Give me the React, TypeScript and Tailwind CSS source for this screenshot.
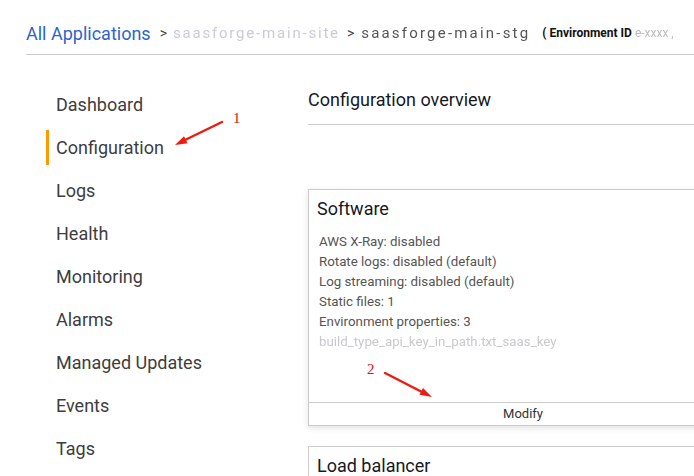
import React from "react";

const NAV = [
  "Dashboard",
  "Configuration",
  "Logs",
  "Health",
  "Monitoring",
  "Alarms",
  "Managed Updates",
  "Events",
  "Tags",
];

const SOFTWARE = [
  "AWS X-Ray: disabled",
  "Rotate logs: disabled (default)",
  "Log streaming: disabled (default)",
  "Static files: 1",
  "Environment properties: 3",
];

function Annotations() {
  return (
    <div className="pointer-events-none absolute inset-0">
      <svg width="694" height="476" className="absolute left-0 top-0">
        <line x1="222" y1="122" x2="184" y2="140.5" stroke="#ec1c12" strokeWidth="2.5" strokeLinecap="round" />
        <polygon points="175,145 187.6,143.2 184,136.2" fill="#ec1c12" />
        <line x1="385" y1="373" x2="422" y2="392" stroke="#ec1c12" strokeWidth="2.5" strokeLinecap="round" />
        <polygon points="432,397 419.5,394.8 423,388" fill="#ec1c12" />
      </svg>
      <span className="absolute left-[233px] top-[109px] text-[15px] leading-[18px] text-[#e3120b] font-['Liberation_Serif',serif]">
        1
      </span>
      <span className="absolute left-[367px] top-[360px] text-[15px] leading-[18px] text-[#e3120b] font-['Liberation_Serif',serif]">
        2
      </span>
    </div>
  );
}

export default function App() {
  return (
    <div className="relative h-[476px] w-[694px] overflow-hidden bg-white font-['Roboto',sans-serif]">
      <div className="ml-[26px] flex h-[55px] items-center whitespace-nowrap border-b border-[#cccccc] pt-[12px]">
        <span className="text-[18px] text-[#2b65c8]">All Applications</span>
        <span className="ml-[9px] mr-[6px] text-[14px] text-[#444]">&gt;</span>
        <span className="text-[15px] tracking-[1.8px] text-[#c9cbd9] blur-[0.6px]">saasforge-main-site</span>
        <span className="mx-[7px] text-[14px] text-[#444]">&gt;</span>
        <span className="text-[15px] tracking-[2.2px] text-[#555] blur-[0.6px]">saasforge-main-stg</span>
        <span className="ml-[12px] text-[12px] font-bold text-[#111]">( Environment ID</span>
        <span className="ml-[3px] text-[12px] text-[#bbb] blur-[0.6px]">e-xxxx ,</span>
      </div>

      <div className="flex">
        <nav className="w-[308px] shrink-0 pl-[46px] pt-[28px]">
          {NAV.map((item) => {
            const active = item === "Configuration";
            return (
              <div key={item} className="flex h-[43px] items-center">
                <div className={`h-[35px] w-[3px] ${active ? "bg-[#ff9900]" : ""}`} />
                <span className="ml-[7px] text-[18px] text-[#3d3d3d]">{item}</span>
              </div>
            );
          })}
        </nav>

        <main className="w-[430px] shrink-0">
          <div className="border-b border-[#cccccc] pb-[12px] pt-[33px]">
            <h2 className="text-[18px] leading-[24px] text-[#16191f]">Configuration overview</h2>
          </div>

          <section className="mt-[64px] border border-[#cccccc] bg-white shadow-[0_2px_6px_rgba(0,0,0,0.12)]">
            <div className="px-[8px] pt-[7px]">
              <h3 className="text-[18px] leading-[24px] text-[#16191f]">Software</h3>
              <ul className="mt-[11px] pl-[2px] text-[13.3px] leading-[20px] text-[#555]">
                {SOFTWARE.map((line) => (
                  <li key={line}>{line}</li>
                ))}
                <li className="text-[#c8c8d0] blur-[0.6px]">build_type_api_key_in_path.txt_saas_key</li>
              </ul>
            </div>
            <div className="mt-[50px] border-t border-[#cccccc] text-center text-[13px] leading-[22px] text-[#333]">
              Modify
            </div>
          </section>

          <section className="mt-[20px] h-[60px] border border-[#cccccc] px-[8px] pt-[7px]">
            <h3 className="text-[18px] leading-[24px] text-[#16191f]">Load balancer</h3>
          </section>
        </main>
      </div>

      <Annotations />
    </div>
  );
}
